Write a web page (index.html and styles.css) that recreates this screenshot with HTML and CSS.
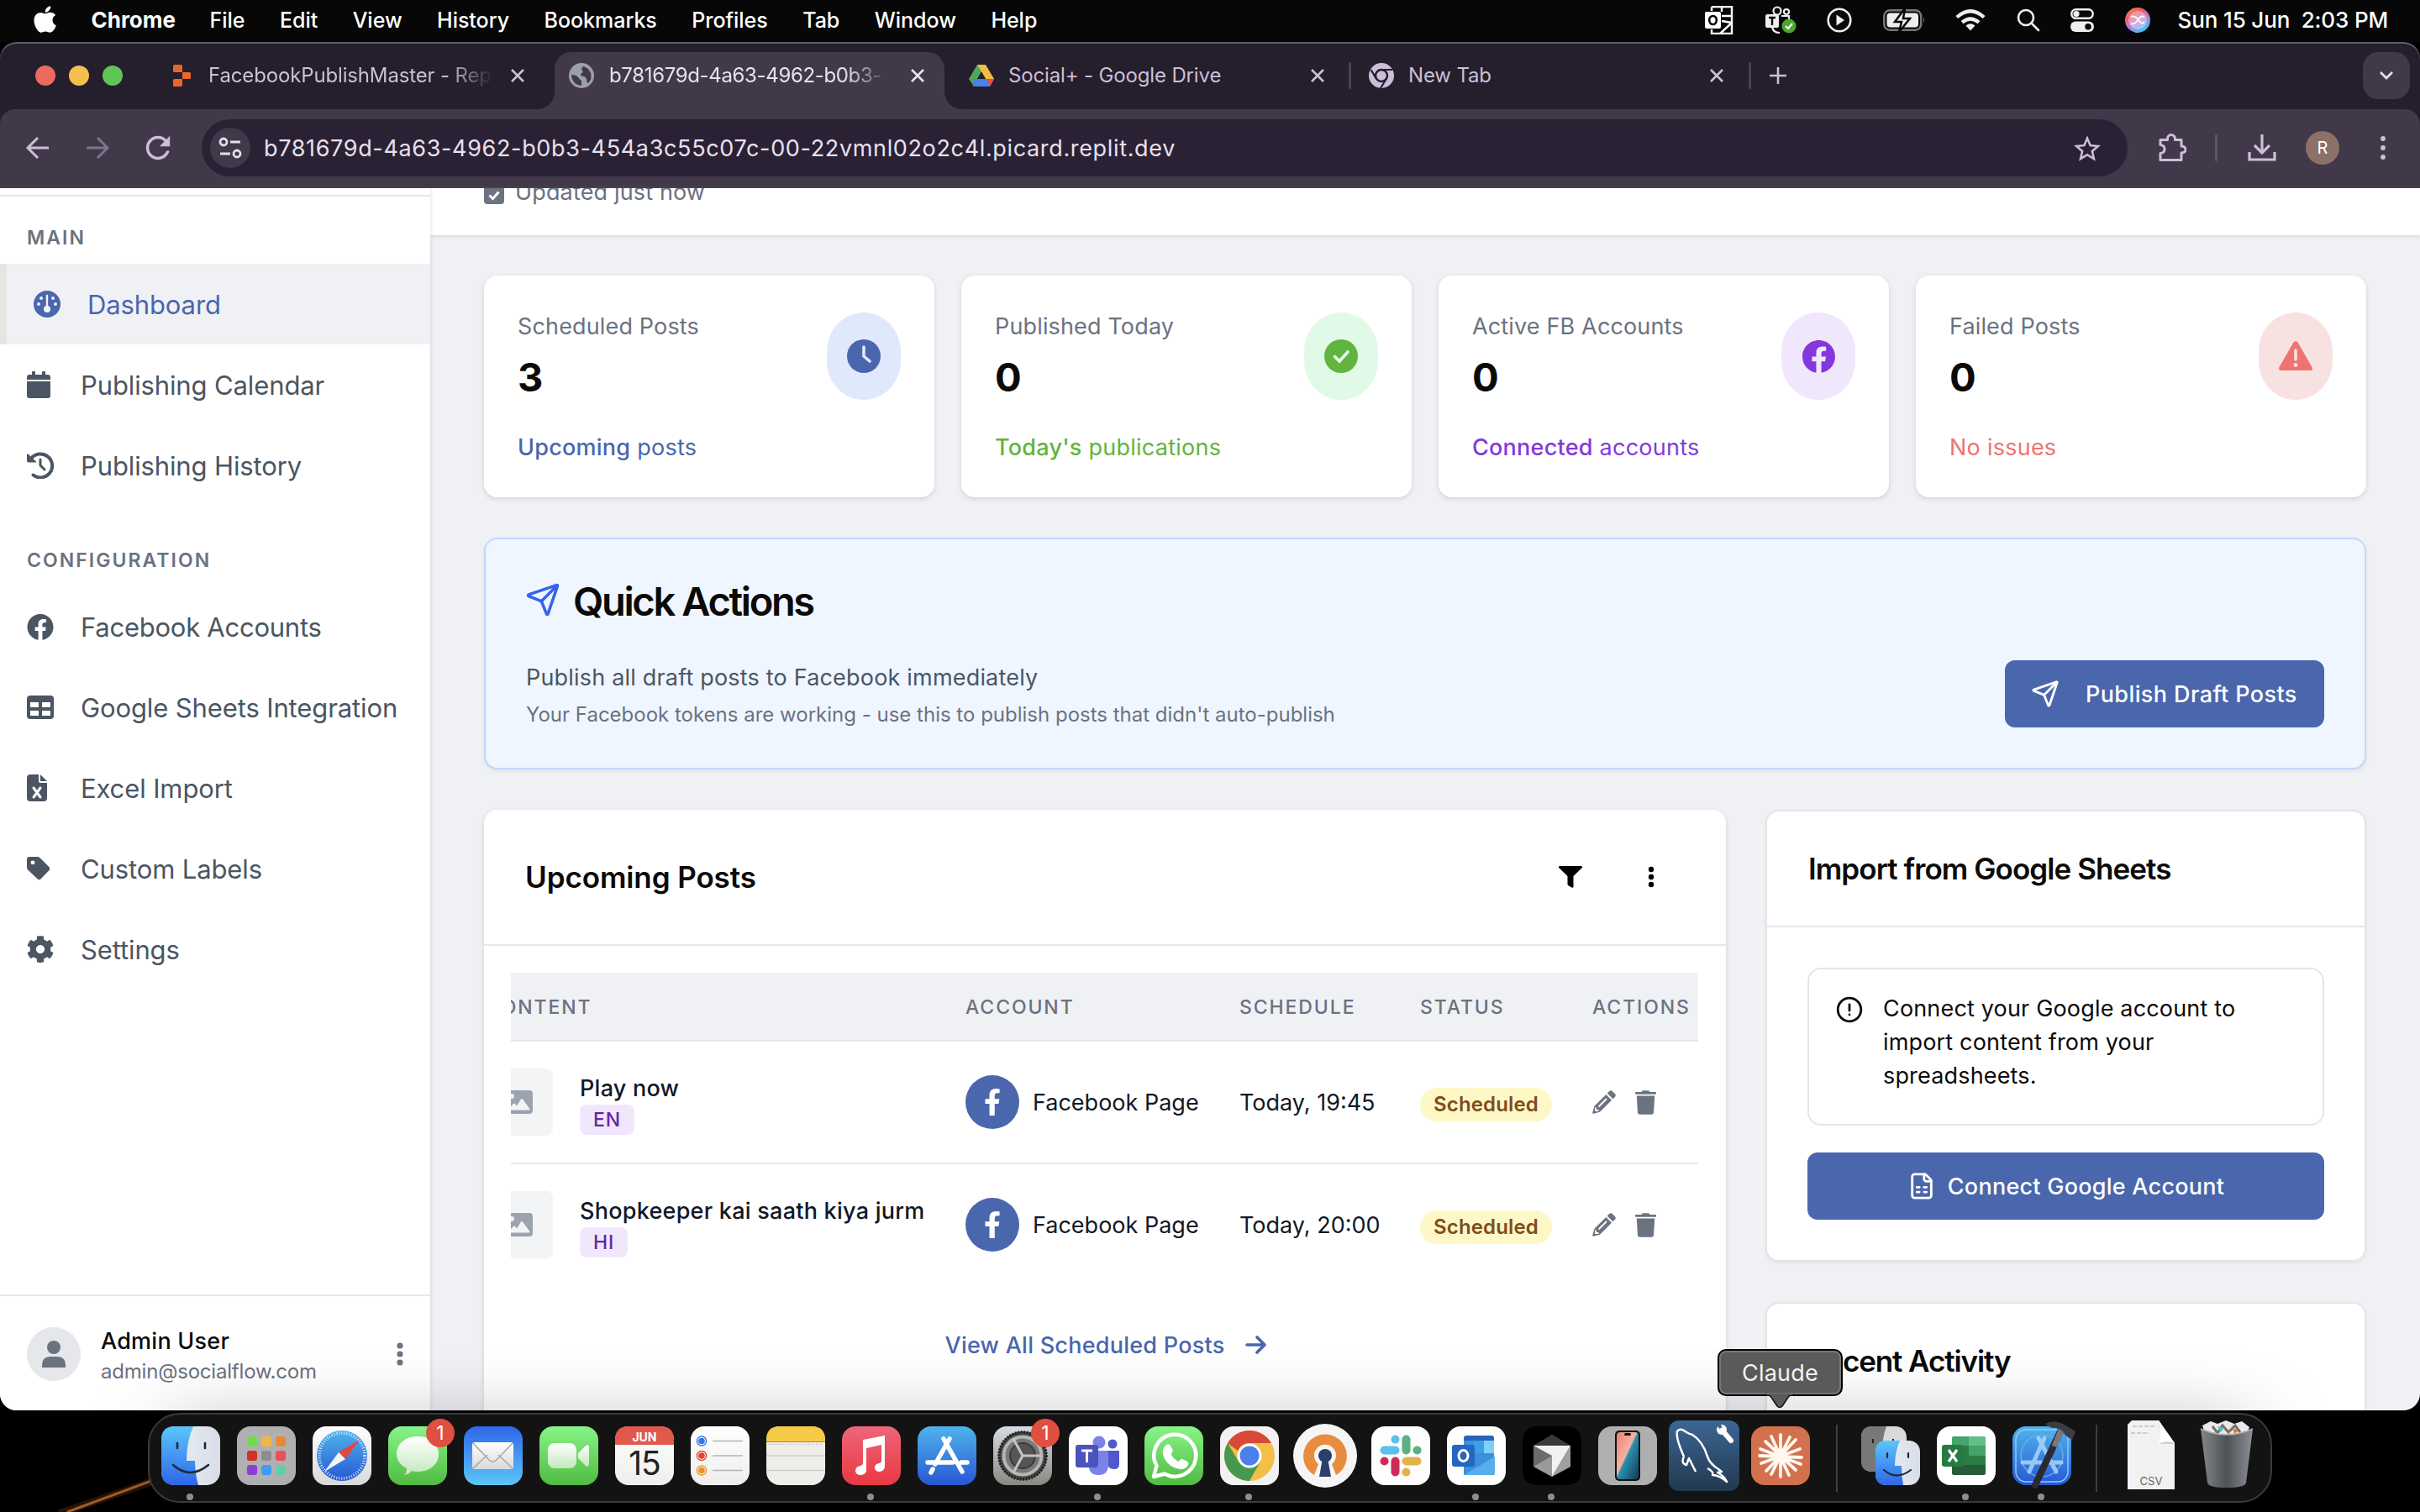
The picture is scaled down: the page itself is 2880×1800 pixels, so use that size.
FILE: index.html
```html
<!DOCTYPE html>
<html lang="en">
<head>
<meta charset="utf-8">
<title>SocialFlow Dashboard</title>
<link rel="stylesheet" href="styles.css">
</head>
<body>
<svg class="sprite" width="0" height="0">
  <defs>
    <symbol id="fb" viewBox="8 8 496 496"><path d="M504 256C504 119 393 8 256 8S8 119 8 256c0 123.78 90.69 226.38 209.25 245V327.69h-63V256h63v-54.64c0-62.15 37-96.48 93.67-96.48 27.14 0 55.52 4.84 55.52 4.84v61h-31.28c-30.8 0-40.41 19.12-40.41 38.73V256h68.78l-11 71.69h-57.78V501C413.31 482.38 504 379.78 504 256z"/></symbol>
    <symbol id="fbf" viewBox="0 0 320 512"><path d="M279.14 288l14.22-92.66h-88.91v-60.13c0-25.35 12.42-50.06 52.24-50.06h40.42V6.26S260.43 0 225.36 0c-73.22 0-121.08 44.38-121.08 124.72v70.62H22.89V288h81.39v224h100.17V288z"/></symbol>
    <symbol id="send" viewBox="0 0 24 24"><g fill="none" stroke="currentColor" stroke-width="2" stroke-linecap="round" stroke-linejoin="round"><path d="M14.536 21.686a.5.5 0 0 0 .937-.024l6.5-19a.496.496 0 0 0-.635-.635l-19 6.5a.5.5 0 0 0-.024.937l7.93 3.18a2 2 0 0 1 1.112 1.11z"/><path d="m21.854 2.147-10.94 10.939"/></g></symbol>
    <symbol id="close" viewBox="0 0 18 18"><path d="M2 2l14 14M16 2L2 16" fill="none" stroke="currentColor" stroke-width="2.6"/></symbol>
    <symbol id="image" viewBox="0 0 32 28"><path fill-rule="evenodd" d="M4 0h24a4 4 0 0 1 4 4v20a4 4 0 0 1-4 4H4a4 4 0 0 1-4-4V4a4 4 0 0 1 4-4zm3 4a3 3 0 1 0 0 6 3 3 0 0 0 0-6zM4 23.500h23.500q1.500-.5.5-2L20 10.500q-1-1-2 0l-5 8-2-2.500q-1-1-2 0l-5.500 6z"/></symbol>
    <symbol id="pen" viewBox="0 0 28 28"><path d="M20 1.200q2-2 4 0l2.800 2.800q2 2 0 4L24.500 10.300 17.700 3.500zM16.300 5l6.700 6.700L10 24.800q-.8.8-2 1.100L1.500 27.800Q0 28 .2 26.500L2.100 20q.3-1.200 1.100-2z"/><path d="M7.500 19.500L17 10M4 20.500v3.500h3.500" fill="none" stroke="#fff" stroke-width="1.800"/></symbol>
    <symbol id="trash" viewBox="0 0 448 512"><path d="M432 32H312l-9.400-18.700A24 24 0 0 0 281.100 0H166.800a23.720 23.720 0 0 0-21.400 13.300L136 32H16A16 16 0 0 0 0 48v16a16 16 0 0 0 16 16h416a16 16 0 0 0 16-16V48a16 16 0 0 0-16-16zM53.200 467a48 48 0 0 0 47.900 45h245.800a48 48 0 0 0 47.900-45L416 112H32z"/></symbol>
    <linearGradient id="gBlue" x2="0" y2="1"><stop stop-color="#5bc6fb"/><stop offset="1" stop-color="#2f66e8"/></linearGradient>
    <linearGradient id="gGreen" x2="0" y2="1"><stop stop-color="#86f487"/><stop offset="1" stop-color="#51bb42"/></linearGradient>
    <linearGradient id="gMail" x2="0" y2="1"><stop stop-color="#2f67e8"/><stop offset="1" stop-color="#5cc6f8"/></linearGradient>
    <linearGradient id="gWhite" x2="0" y2="1"><stop stop-color="#fff"/><stop offset="1" stop-color="#d9d9d9"/></linearGradient>
    <linearGradient id="gPale" x2="0" y2="1"><stop stop-color="#fff"/><stop offset="1" stop-color="#eeeeec"/></linearGradient>
    <linearGradient id="gBubble" x2="0" y2="1"><stop stop-color="#fff"/><stop offset="1" stop-color="#c3e8bd"/></linearGradient>
    <linearGradient id="gSilver" x2="1" y2="0"><stop stop-color="#f1f2f6"/><stop offset="1" stop-color="#d7dde8"/></linearGradient>
    <linearGradient id="gMusic" x2="0" y2="1"><stop stop-color="#ee6579"/><stop offset="1" stop-color="#e83942"/></linearGradient>
    <linearGradient id="gStore" x2="0" y2="1"><stop stop-color="#4fb4ec"/><stop offset="1" stop-color="#2857d4"/></linearGradient>
    <linearGradient id="gGear" x2="0" y2="1"><stop stop-color="#d5dde5"/><stop offset="1" stop-color="#8b8782"/></linearGradient>
    <linearGradient id="gNavy" x2="0" y2="1"><stop stop-color="#3c6694"/><stop offset="1" stop-color="#22394f"/></linearGradient>
    <linearGradient id="gPhone" x2="1" y2="1"><stop stop-color="#ef7d72"/><stop offset=".45" stop-color="#f3b4a4"/><stop offset=".5" stop-color="#2a8fae"/><stop offset="1" stop-color="#123a52"/></linearGradient>
    <linearGradient id="gTrash" x2="1" y2="0"><stop stop-color="#83878b"/><stop offset=".5" stop-color="#4d5256"/><stop offset="1" stop-color="#8d9195"/></linearGradient>
    <linearGradient id="gSiri" x2=".6" y2="1"><stop stop-color="#f2a036"/><stop offset=".35" stop-color="#ee5a63"/><stop offset=".65" stop-color="#b57fd8"/><stop offset="1" stop-color="#3fc2f4"/></linearGradient>
  </defs>
</svg>

<header class="menubar">
  <svg class="apple" viewBox="0 28 380 456"><path d="M318.700 268.700c-.2-36.700 16.400-64.400 50-84.800-18.800-26.900-47.200-41.700-84.700-44.600-35.500-2.800-74.300 20.700-88.500 20.700-15 0-49.400-19.700-76.400-19.700C63.300 141.200 4 184.800 4 273.500q0 39.300 14.400 81.200c12.800 36.700 59 126.700 107.200 125.200 25.200-.6 43-17.900 75.800-17.900 31.800 0 48.300 17.900 76.400 17.900 48.600-.7 90.400-82.500 102.600-119.300-65.200-30.700-61.700-90-61.700-91.900zm-56.600-164.200c27.300-32.400 24.800-61.900 24-72.500-24.100 1.400-52 16.400-67.900 34.900-17.500 19.800-27.800 44.300-25.600 71.900 26.100 2 49.900-11.400 69.500-34.300z"/></svg>
  <b>Chrome</b><span>File</span><span>Edit</span><span>View</span><span>History</span><span>Bookmarks</span><span>Profiles</span><span>Tab</span><span>Window</span><span>Help</span>
  <div class="status">
    <svg width="34" height="34" viewBox="0 0 34 34"><path d="M8 1h24v20M8 6V1M8 28v5h24V20L18 33M20 12h12M20 1v6M32 20l-12-2" fill="none" stroke="#fff" stroke-width="2.400"/><rect y="7" width="19" height="20" rx="2" fill="#fff"/><ellipse cx="9.500" cy="17" rx="4.300" ry="5" fill="none" stroke="#070707" stroke-width="2.600"/></svg>
    <svg width="38" height="34" viewBox="0 0 38 34"><g fill="none" stroke="#eee" stroke-width="2.200"><circle cx="15" cy="6" r="4.500"/><circle cx="26" cy="7" r="3"/><path d="M20 12h9v7M9 25q1 7 9 7"/></g><rect x="1" y="10" width="16" height="16" rx="2" fill="#eee"/><path d="M5 14h8M9 14v9" stroke="#070707" stroke-width="2.400"/><circle cx="29" cy="24" r="8.500" fill="#4aa62f"/><path d="M25 24l3 3 5-6" fill="none" stroke="#fff" stroke-width="2"/></svg>
    <svg width="30" height="30" viewBox="0 0 30 30"><circle cx="15" cy="15" r="13.300" fill="none" stroke="#eee" stroke-width="2.600"/><path d="M11.500 8.500L21 15l-9.500 6.500z" fill="#eee"/></svg>
    <svg width="50" height="28" viewBox="0 0 50 28"><rect x="1.200" y="2.200" width="44" height="23.600" rx="7" fill="none" stroke="#777" stroke-width="2.400"/><path d="M48 10q2 4 0 8z" fill="#777"/><rect x="4.500" y="5.500" width="37.500" height="17" rx="4" fill="#eee"/><path d="M26 0L14 16h8l-3 12 13-16h-8z" fill="#eee" stroke="#070707" stroke-width="2.500"/></svg>
    <svg width="36" height="26" viewBox="0 0 36 26"><g fill="none" stroke="#eee" stroke-width="4.200"><path d="M1.800 9.500q16.200-14.500 32.400 0"/><path d="M8 15.700q10-8.500 20 0"/></g><path d="M18 25.500l-5.500-6q5.500-4.500 11 0z" fill="#eee"/></svg>
    <svg width="28" height="28" viewBox="0 0 28 28"><g fill="none" stroke="#eee" stroke-width="2.600" stroke-linecap="round"><circle cx="11" cy="11" r="9"/><path d="M18 18l8 8"/></g></svg>
    <svg width="28" height="28" viewBox="0 0 28 28"><rect x="1.300" y="1.300" width="25.400" height="10.500" rx="5.200" fill="none" stroke="#eee" stroke-width="2.500"/><circle cx="7" cy="6.500" r="3.600" fill="#eee"/><rect y="15.500" width="28" height="12.500" rx="6.200" fill="#eee"/><circle cx="21" cy="21.700" r="3.800" fill="#070707"/></svg>
    <svg width="30" height="30" viewBox="0 0 30 30"><circle cx="15" cy="15" r="15" fill="url(#gSiri)"/><circle cx="15" cy="15" r="10" fill="#fff" opacity=".35" stroke="#fff" stroke-width="2"/><path d="M7 11q5-2 9 4t7 2M7 19q4 2 8-4t8-4" fill="none" stroke="#fff" stroke-width="1.800"/></svg>
    <time>Sun 15 Jun &nbsp;2:03 PM</time>
  </div>
</header>

<section class="window">
  <div class="tabstrip">
    <div class="lights"><i class="red"></i><i class="yellow"></i><i class="green"></i></div>
    <div class="tab first">
      <svg width="22" height="26" viewBox="0 0 22 26" fill="#e9672a"><path d="M0 1.500Q0 0 1.500 0H9.500Q11 0 11 1.500V9H1.500Q0 9 0 7.500zM11 9h8.500Q21 9 21 10.500v5q0 1.500-1.500 1.500H11zM1.500 17H11v7.500q0 1.500-1.500 1.500h-8Q0 26 0 24.500v-6Q0 17 1.500 17z"/></svg>
      <span class="tab-title fade">FacebookPublishMaster - Rep</span>
      <svg class="x"><use href="#close"/></svg>
    </div>
    <div class="tab active">
      <svg width="30" height="30" viewBox="0 0 30 30"><circle cx="15" cy="15" r="15" fill="#9aa0a6"/><path d="M3 14q6 0 8 3t4 4v6Q4 26 3 14zM17 4q-3 3-1 5t-2 4q0 3 4 3 3 1 3 4t2 4q5-5 3-12-2-6-9-8z" fill="#413849"/></svg>
      <span class="tab-title fade id">b781679d-4a63-4962-b0b3-</span>
      <svg class="x"><use href="#close"/></svg>
    </div>
    <div class="tab drive">
      <svg width="30" height="28" viewBox="0 0 30 28"><path d="M10 1h10l-5 8.500L5.500 26 0 18z" fill="#4fa75b"/><path d="M10 1h10l10 17H20z" fill="#f3bc42"/><path d="M5.500 18H30l-5 9H5z" fill="#4a80e8"/><path d="M21 18h9l-5 9z" fill="#df5140"/><path d="M15 9.500L20 18H10z" fill="#241e2d"/></svg>
      <span class="tab-title">Social+ - Google Drive</span>
      <svg class="x"><use href="#close"/></svg>
    </div>
    <i class="sep"></i>
    <div class="tab new">
      <svg width="30" height="30" viewBox="0 0 30 30"><circle cx="15" cy="15" r="15" fill="#cbbfd8"/><circle cx="15" cy="15" r="7" fill="#cbbfd8" stroke="#241e2d" stroke-width="2.500"/><path d="M15 8h13M9 19L2.500 8M21 18.500L14 30" stroke="#241e2d" stroke-width="2.200"/></svg>
      <span class="tab-title">New Tab</span>
      <svg class="x"><use href="#close"/></svg>
    </div>
    <i class="sep"></i>
    <svg class="plus" width="22" height="22" viewBox="0 0 22 22"><path d="M11 1v20M1 11h20" stroke="#cbbfd8" stroke-width="2.600"/></svg>
    <span class="tab-search"><svg width="18" height="12" viewBox="0 0 18 12"><path d="M2 2l7 7 7-7" fill="none" stroke="#e5dcee" stroke-width="2.800"/></svg></span>
  </div>

  <div class="toolbar">
    <svg class="nav-btn" viewBox="0 0 40 40"><path d="M33 20H9M20 8L8 20l12 12" fill="none" stroke="#cbbfd8" stroke-width="3"/></svg>
    <svg class="nav-btn fwd" viewBox="0 0 40 40"><path d="M7 20h24M20 8l12 12-12 12" fill="none" stroke="#7f7489" stroke-width="3"/></svg>
    <svg class="nav-btn reload" viewBox="3 3 18 18"><path fill="#cbbfd8" d="M17.650 6.350C16.200 4.900 14.210 4 12 4c-4.420 0-7.990 3.580-7.990 8s3.570 8 7.990 8c3.730 0 6.840-2.550 7.730-6h-2.080c-.82 2.330-3.040 4-5.650 4-3.310 0-6-2.690-6-6s2.690-6 6-6c1.660 0 3.140.69 4.220 1.780L13 11h7V4l-2.350 2.350z"/></svg>
    <div class="omnibox">
      <span class="site-info"><svg width="28" height="26" viewBox="0 0 28 26" fill="none" stroke="#e5dcee" stroke-width="2.800"><circle cx="6" cy="6" r="4"/><path d="M14 6h12M2 20h12"/><circle cx="22" cy="20" r="4"/></svg></span>
      <span class="url">b781679d-4a63-4962-b0b3-454a3c55c07c-00-22vmnl02o2c4l.picard.replit.dev</span>
      <svg width="32" height="31" viewBox="2 2 20 19"><path fill="#cbbfd8" d="M22 9.240l-7.190-.62L12 2 9.190 8.630 2 9.240l5.460 4.730L5.820 21 12 17.270 18.180 21l-1.630-7.030L22 9.240zM12 15.400l-3.760 2.270 1-4.280-3.320-2.880 4.380-.38L12 6.100l1.710 4.040 4.380.38-3.320 2.880 1 4.280L12 15.400z"/></svg>
    </div>
    <svg class="ext" width="34" height="34" viewBox="0 0 34 34"><path d="M3 7.500h8.500V6a4.500 4.500 0 0 1 9 0v1.500H28V15q5 .5 5 4t-5 4v8.500H3v-8q5-.5 5-5t-5-5z" fill="none" stroke="#cbbfd8" stroke-width="3" stroke-linejoin="round"/></svg>
    <i class="sep tall"></i>
    <svg class="dl" width="34" height="32" viewBox="0 0 34 32"><path d="M17 0v22M8 13l9 9 9-9M2 21v9h30v-9" fill="none" stroke="#cbbfd8" stroke-width="3.200"/></svg>
    <span class="profile">R</span>
    <svg class="kebab" width="6" height="28" viewBox="0 0 6 28" fill="#cbbfd8"><circle cx="3" cy="3" r="2.900"/><circle cx="3" cy="14" r="2.900"/><circle cx="3" cy="25" r="2.900"/></svg>
  </div>

  <div class="page">
    <aside class="sidebar">
      <nav>
        <h4>MAIN</h4>
        <a class="current"><svg width="32" height="32" viewBox="0 0 32 32"><circle cx="16" cy="16" r="16"/><path d="M16 6v14" stroke="#f0f1f5" stroke-width="2.400" stroke-linecap="round"/><g fill="#f0f1f5"><circle cx="16" cy="22" r="4"/><circle cx="9" cy="9" r="2"/><circle cx="23" cy="9" r="2"/><circle cx="6" cy="16" r="2"/><circle cx="26" cy="16" r="2"/></g></svg>Dashboard</a>
        <a><svg width="28" height="32" viewBox="0 0 28 32"><path d="M0 10V7q0-3 3-3h3V1.500a2 2 0 0 1 4 0V4h8V1.500a2 2 0 0 1 4 0V4h3q3 0 3 3v3zM0 12h28v17q0 3-3 3H3q-3 0-3-3z"/></svg>Publishing Calendar</a>
        <a><svg width="32" height="32" viewBox="0 0 32 32"><path d="M5 8A14 14 0 1 1 7.500 27.500" fill="none" stroke="currentColor" stroke-width="4" stroke-linecap="round"/><path d="M0 3.500Q0 1.500 1.800 2.800L11 11.500q.8 1-.6 1H2q-2 0-2-2z"/><path d="M16 9v7l5 5" fill="none" stroke="currentColor" stroke-width="3" stroke-linecap="round"/></svg>Publishing History</a>
        <h4 class="config">CONFIGURATION</h4>
        <a class="accounts"><svg width="32" height="31"><use href="#fb"/></svg>Facebook Accounts</a>
        <a><svg width="32" height="28" viewBox="0 0 32 28"><path fill-rule="evenodd" d="M4 0h24q4 0 4 4v20q0 4-4 4H4q-4 0-4-4V4q0-4 4-4zm0 8v6h10V8zm14 0v6h10V8zM4 18v6h10v-6zm14 0v6h10v-6z"/></svg>Google Sheets Integration</a>
        <a><svg width="24" height="32" viewBox="0 0 24 32"><path d="M4 0h10v8q0 2 2 2h8v18q0 4-4 4H4q-4 0-4-4V4q0-4 4-4zM16 0l8 8h-8z"/><path d="M8 16l8 11M16 16L8 27" stroke="#fff" stroke-width="3" stroke-linecap="round"/></svg>Excel Import</a>
        <a><svg width="28" height="28" viewBox="0 0 28 28"><path fill-rule="evenodd" d="M0 3q0-3 3-3h9.500q1.800 0 3 1.200L26.300 12q2 2 0 4.200L16.700 26.300q-2 2-4.200 0L1.200 15.500Q0 14.300 0 12.500zm7 1.500a2.400 2.400 0 1 0 0 4.800 2.400 2.400 0 0 0 0-4.800z"/></svg>Custom Labels</a>
        <a><svg width="32" height="32" viewBox="6 6 500 500"><path d="M487.400 315.700l-42.600-24.600c4.300-23.200 4.300-47 0-70.200l42.600-24.600c4.900-2.800 7.100-8.600 5.500-14-11.100-35.600-30-67.800-54.700-94.600-3.800-4.100-10-5.100-14.800-2.300L380.800 110c-17.900-15.400-38.500-27.300-60.800-35.100V25.800c0-5.600-3.900-10.500-9.400-11.700-36.700-8.200-74.300-7.800-109.200 0-5.500 1.200-9.400 6.100-9.400 11.700V75c-22.200 7.900-42.800 19.800-60.800 35.100L88.700 85.500c-4.900-2.800-11-1.900-14.800 2.300-24.700 26.700-43.600 58.900-54.700 94.600-1.700 5.400.6 11.200 5.500 14L67.300 221c-4.300 23.200-4.300 47 0 70.200l-42.600 24.600c-4.900 2.800-7.100 8.600-5.500 14 11.100 35.600 30 67.800 54.700 94.600 3.800 4.100 10 5.100 14.800 2.300l42.600-24.600c17.900 15.400 38.500 27.300 60.800 35.100v49.200c0 5.600 3.900 10.500 9.400 11.700 36.700 8.200 74.300 7.800 109.200 0 5.500-1.200 9.400-6.100 9.400-11.700v-49.200c22.200-7.900 42.800-19.800 60.800-35.100l42.600 24.600c4.900 2.800 11 1.900 14.800-2.300 24.700-26.700 43.600-58.900 54.700-94.600 1.500-5.500-.7-11.300-5.600-14.100zM256 336c-44.100 0-80-35.900-80-80s35.900-80 80-80 80 35.900 80 80-35.900 80-80 80z"/></svg>Settings</a>
      </nav>
      <div class="user">
        <span class="user-pic"><svg width="28" height="32" viewBox="0 0 28 32"><circle cx="14" cy="8" r="8"/><path d="M0 32v-2q0-11 10-11h8q10 0 10 11v2z"/></svg></span>
        <div class="user-text"><strong>Admin User</strong><span>admin@socialflow.com</span></div>
        <svg class="dots" width="8" height="28" viewBox="0 0 8 28"><circle cx="4" cy="4" r="3.600"/><circle cx="4" cy="14" r="3.600"/><circle cx="4" cy="24" r="3.600"/></svg>
      </div>
    </aside>

    <main>
      <div class="page-head"><p><svg width="24" height="28" viewBox="0 0 24 28"><rect width="24" height="28" rx="4"/><path d="M6.500 17.500l4 4 7-8" fill="none" stroke="#fff" stroke-width="3"/></svg>Updated just now</p></div>
      <div class="content">
        <div class="stats">
          <article class="card stat blue"><div class="top"><div><p>Scheduled Posts</p><b>3</b></div><span class="pill"><svg width="40" height="40" viewBox="0 0 40 40"><circle cx="20" cy="20" r="20"/><path d="M20 9v11l7 6" fill="none" stroke="#dfe9fb" stroke-width="3.600" stroke-linecap="round"/></svg></span></div><p class="sub"><em>Upcoming</em> posts</p></article>
          <article class="card stat green"><div class="top"><div><p>Published Today</p><b>0</b></div><span class="pill"><svg width="40" height="40" viewBox="0 0 40 40"><circle cx="20" cy="20" r="20"/><path d="M12.500 20.500l5.500 5.500 10-11" fill="none" stroke="#e1f9e7" stroke-width="3.800" stroke-linecap="round"/></svg></span></div><p class="sub"><em>Today's</em> publications</p></article>
          <article class="card stat purple"><div class="top"><div><p>Active FB Accounts</p><b>0</b></div><span class="pill"><svg width="39" height="39"><use href="#fb"/></svg></span></div><p class="sub"><em>Connected</em> accounts</p></article>
          <article class="card stat rose"><div class="top"><div><p>Failed Posts</p><b>0</b></div><span class="pill"><svg width="40" height="36" viewBox="0 0 40 36"><path d="M17.500 1.500q2.500-3 5 0L39.500 31q1.500 4-2.500 4H3q-4 0-2.500-4z"/><path d="M20 11v11" stroke="#f8e2e1" stroke-width="3.600" stroke-linecap="round"/><circle cx="20" cy="28.500" r="2.400" fill="#f8e2e1"/></svg></span></div><p class="sub">No issues</p></article>
        </div>

        <section class="quick">
          <h2><svg width="42" height="42"><use href="#send"/></svg>Quick Actions</h2>
          <div class="quick-row">
            <div><p>Publish all draft posts to Facebook immediately</p><small>Your Facebook tokens are working - use this to publish posts that didn't auto-publish</small></div>
            <button class="btn publish"><svg width="34" height="34"><use href="#send"/></svg>Publish Draft Posts</button>
          </div>
        </section>

        <div class="columns">
          <section class="card posts">
            <header><h3>Upcoming Posts</h3>
              <svg width="28" height="26" viewBox="0 0 512 490" preserveAspectRatio="none"><path d="M487.976 0H24.028C2.710 0-8.047 25.866 7.058 40.971L192 225.941V412c0 7.831 3.821 15.170 10.237 19.662l80 50C298.020 492.690 320 480.493 320 460.980V225.941l184.947-184.970C520.021 25.896 509.338 0 487.976 0z"/></svg>
              <svg class="more" width="8" height="26" viewBox="0 0 8 26"><circle cx="4" cy="4" r="3.200"/><circle cx="4" cy="13" r="3.200"/><circle cx="4" cy="22" r="3.200"/></svg>
            </header>
            <div class="scroller">
              <div class="table">
                <div class="row head"><span>CONTENT</span><span>ACCOUNT</span><span>SCHEDULE</span><span>STATUS</span><span>ACTIONS</span></div>
                <div class="row">
                  <div class="post"><i><svg width="32" height="28"><use href="#image"/></svg></i><div><p>Play now</p><span class="lang">EN</span></div></div>
                  <div class="account"><i><svg width="20" height="32"><use href="#fbf"/></svg></i>Facebook Page</div>
                  <span>Today, 19:45</span>
                  <span><mark>Scheduled</mark></span>
                  <div class="actions"><svg width="28" height="28"><use href="#pen"/></svg><svg width="25" height="29"><use href="#trash"/></svg></div>
                </div>
                <div class="row">
                  <div class="post"><i><svg width="32" height="28"><use href="#image"/></svg></i><div><p>Shopkeeper kai saath kiya jurm</p><span class="lang">HI</span></div></div>
                  <div class="account"><i><svg width="20" height="32"><use href="#fbf"/></svg></i>Facebook Page</div>
                  <span>Today, 20:00</span>
                  <span><mark>Scheduled</mark></span>
                  <div class="actions"><svg width="28" height="28"><use href="#pen"/></svg><svg width="25" height="29"><use href="#trash"/></svg></div>
                </div>
              </div>
            </div>
            <a class="view-all">View All Scheduled Posts<svg width="25" height="22" viewBox="0 0 25 22"><path d="M2 11h20M14 2l9 9-9 9" fill="none" stroke="currentColor" stroke-width="3.600" stroke-linecap="round" stroke-linejoin="round"/></svg></a>
          </section>

          <div class="side">
            <section class="panel import">
              <header><h3>Import from Google Sheets</h3></header>
              <div class="panel-body">
                <div class="notice"><svg width="32" height="32" viewBox="0 0 32 32" fill="none" stroke="#0c0a09" stroke-width="2.800" stroke-linecap="round"><circle cx="16" cy="16" r="13.800"/><path d="M16 10v7M16 22v.1"/></svg><p>Connect your Google account to import content from your spreadsheets.</p></div>
                <button class="btn connect"><svg width="34" height="34" viewBox="0 0 24 24" fill="none" stroke="#fff" stroke-width="2" stroke-linecap="round" stroke-linejoin="round"><path d="M15 2H6a2 2 0 0 0-2 2v16a2 2 0 0 0 2 2h12a2 2 0 0 0 2-2V7Z"/><path d="M14 2v4a2 2 0 0 0 2 2h4M8 13h2M14 13h2M8 17h2M14 17h2"/></svg>Connect Google Account</button>
              </div>
            </section>
            <section class="panel recent"><header><h3>Recent Activity</h3></header></section>
          </div>
        </div>
      </div>
    </main>
  </div>
</section>

<footer class="desktop">
  <svg class="flare" width="180" height="60" viewBox="0 0 180 60"><path d="M70 62L180 24" stroke="#7a4316" stroke-width="9" opacity=".3"/><path d="M80 60L180 23" stroke="#a35c27" stroke-width="3"/></svg>
  <div class="dock">
    <div class="app run"><svg viewBox="0 0 70 70"><rect width="70" height="70" rx="16" fill="url(#gSilver)"/><path d="M16 0h22q-8 18-8 41h10q0 15 4 29H16Q0 70 0 54V16Q0 0 16 0z" fill="url(#gBlue)"/><path d="M19 20v6M52 20v6M14 46q20 18 42 0" fill="none" stroke="#1c2a3c" stroke-width="2.600" stroke-linecap="round"/></svg></div>
    <div class="app"><svg viewBox="0 0 70 70"><rect width="70" height="70" rx="16" fill="#b0b0b2"/><g><rect x="12" y="12" width="12" height="12" rx="3" fill="#76d84c"/><rect x="29" y="12" width="12" height="12" rx="3" fill="#f0b83c"/><rect x="46" y="12" width="12" height="12" rx="3" fill="#e88a34"/><rect x="12" y="29" width="12" height="12" rx="3" fill="#cf3226"/><rect x="29" y="29" width="12" height="12" rx="3" fill="#8b8d90"/><rect x="46" y="29" width="12" height="12" rx="3" fill="#e8505b"/><rect x="12" y="46" width="12" height="12" rx="3" fill="#8b3fcf"/><rect x="29" y="46" width="12" height="12" rx="3" fill="#3d9df2"/><rect x="46" y="46" width="12" height="12" rx="3" fill="#63cfa0"/></g></svg></div>
    <div class="app"><svg viewBox="0 0 70 70"><rect width="70" height="70" rx="16" fill="url(#gWhite)"/><circle cx="35" cy="35" r="30" fill="url(#gStore)"/><circle cx="35" cy="35" r="27" fill="none" stroke="#d5ecfb" stroke-width="3.500" stroke-dasharray="1 2"/><path d="M56 16L39 39l-8-8z" fill="#e4473c"/><path d="M14 54l17-23 8 8z" fill="#f3f3f3"/></svg></div>
    <div class="app"><svg viewBox="0 0 70 70"><rect width="70" height="70" rx="16" fill="url(#gGreen)"/><path d="M35 12c15 0 25 9 25 21S50 54 35 54q-4 0-7-1-3 4-9 5 3-3 3-8Q10 44 10 33c0-12 10-21 25-21z" fill="url(#gBubble)"/><circle cx="62" cy="8" r="17" fill="#e04f3f"/></svg><span class="badge">1</span></div>
    <div class="app"><svg viewBox="0 0 70 70"><rect width="70" height="70" rx="16" fill="url(#gMail)"/><rect x="10" y="19" width="49" height="32" rx="3" fill="url(#gWhite)"/><path d="M11 50l17-16M58 50L41 34M11 20l19 20q5 4 9 0l19-20" fill="none" stroke="#a9a9a9" stroke-width="1.600"/></svg></div>
    <div class="app"><svg viewBox="0 0 70 70"><rect width="70" height="70" rx="16" fill="url(#gGreen)"/><rect x="10" y="20" width="34" height="30" rx="8" fill="url(#gBubble)"/><path d="M46 32l9-9q4-2 4 2v20q0 4-4 2l-9-9z" fill="url(#gBubble)"/></svg></div>
    <div class="app cal"><svg viewBox="0 0 70 70"><rect width="70" height="70" rx="16" fill="url(#gPale)"/><path d="M0 22v-6Q0 0 16 0h38q16 0 16 16v6z" fill="#e0594c"/></svg><small>JUN</small><strong>15</strong></div>
    <div class="app"><svg viewBox="0 0 70 70"><rect width="70" height="70" rx="16" fill="url(#gPale)"/><path d="M26 17.500h36M26 35h36M26 52.500h36" stroke="#b5b5b9" stroke-width="1.600"/><g fill="#fff" stroke-width="1.400"><circle cx="13" cy="17.500" r="5.500" stroke="#3478e8"/><circle cx="13" cy="35" r="5.500" stroke="#e24436"/><circle cx="13" cy="52.500" r="5.500" stroke="#e8912d"/></g><circle cx="13" cy="17.500" r="3.800" fill="#3478e8"/><circle cx="13" cy="35" r="3.800" fill="#e24436"/><circle cx="13" cy="52.500" r="3.800" fill="#e8912d"/></svg></div>
    <div class="app"><svg viewBox="0 0 70 70"><rect width="70" height="70" rx="16" fill="#efeeea"/><path d="M0 18v-2Q0 0 16 0h38q16 0 16 16v2z" fill="#f5cb45"/><path d="M0 18.500h70" stroke="#a58a35" stroke-width="1.200"/><path d="M2 21.500h66" stroke="#aaa" stroke-dasharray="1 2"/><path d="M0 35h70M0 52.500h70" stroke="#cfcfcb" stroke-width="1.400"/></svg></div>
    <div class="app run"><svg viewBox="0 0 70 70"><rect width="70" height="70" rx="16" fill="url(#gMusic)"/><path d="M25 16l26-5v36q0 6-6 7-6 0-6-5 0-4 5-5 3-.5 3-3V22l-18 4v26q0 5-6 6-7 0-7-5 0-5 6-6 3-1 3-4z" fill="#fff"/></svg></div>
    <div class="app"><svg viewBox="0 0 70 70"><rect width="70" height="70" rx="16" fill="url(#gStore)"/><path d="M38 15L21 45M31 15l22 39M12 43h30M52 43h7M18 51l-2 4" fill="none" stroke="#fff" stroke-width="5.500" stroke-linecap="round"/></svg></div>
    <div class="app"><svg viewBox="0 0 70 70"><rect width="70" height="70" rx="16" fill="url(#gGear)"/><circle cx="35" cy="35" r="29" fill="#4a4a4a"/><circle cx="35" cy="35" r="28" fill="none" stroke="#1f1f1f" stroke-width="3.500" stroke-dasharray="2 1.500"/><circle cx="35" cy="35" r="22.500" fill="#777" stroke="#b5b5b5" stroke-width="4"/><circle cx="35" cy="35" r="15" fill="#555" stroke="#3a3a3a" stroke-width="2"/><path d="M35 35h22M35 35L24 15M35 35L24 55" stroke="#c4c4c4" stroke-width="3"/><circle cx="62" cy="8" r="17" fill="#e04f3f"/></svg><span class="badge">1</span></div>
    <div class="app run"><svg viewBox="0 0 70 70"><rect width="70" height="70" rx="16" fill="#fff"/><circle cx="36" cy="19" r="7.500" fill="#7b83eb"/><circle cx="52" cy="21" r="5.500" fill="#5059c9"/><path d="M46 29h14v16q0 6-6 6-8 0-8-8z" fill="#5059c9"/><path d="M24 29h23v17q0 12-12 12-11 0-11-11z" fill="#7b83eb"/><rect x="8" y="22" width="27" height="27" rx="3" fill="#4b53bc"/><path d="M15 29h13M21.500 29v14" stroke="#fff" stroke-width="3"/></svg></div>
    <div class="app"><svg viewBox="0 0 70 70"><rect width="70" height="70" rx="16" fill="url(#gGreen)"/><path d="M11 60l3.500-13A25 25 0 1 1 24 56.500z" fill="none" stroke="#fff" stroke-width="4.500" stroke-linejoin="round"/><path d="M26 22q3-2 5 1l2.500 5q1 2-2 5 3 6 9 9 3-4 5-3l5.500 3q2 1 1 4-3 6-10 5-16-3-20-18-1-7 4-11z" fill="#fff"/></svg></div>
    <div class="app run"><svg viewBox="0 0 70 70"><rect width="70" height="70" rx="16" fill="#f2f2f2"/><circle cx="35" cy="35" r="30" fill="#f3bf45"/><path d="M9 20A30 30 0 0 1 61 20H35q-10 0-14 9z" fill="#d8493a"/><path d="M9 20A30 30 0 0 0 35 65l13-23q-13 12-26 0z" fill="#47984f"/><circle cx="35" cy="35" r="14.500" fill="#fff"/><circle cx="35" cy="35" r="11.500" fill="#4a80e8"/></svg></div>
    <div class="app"><svg viewBox="0 0 70 70"><circle cx="35" cy="35" r="38" fill="#f5f5f6"/><path d="M22 58A26 26 0 1 1 48 58L43 45a13 13 0 1 0-16 0z" fill="#e88c40"/><circle cx="35" cy="35" r="8" fill="#28406a"/><path d="M32 38h6l4 22H28z" fill="#28406a"/></svg></div>
    <div class="app"><svg viewBox="0 0 70 70"><rect width="70" height="70" rx="16" fill="#fdfdfd"/><g stroke-width="10" stroke-linecap="round"><path d="M15.500 28.500h13M28.500 15.500v.1" stroke="#5cc0ea"/><path d="M41.500 15.500v13M54.500 28.500h.1" stroke="#5ab27e"/><path d="M41.500 41.500h13M41.500 54.500v.1" stroke="#e3b348"/><path d="M28.500 41.500v13M15.500 41.500h.1" stroke="#cd2c59"/></g></svg></div>
    <div class="app run"><svg viewBox="0 0 70 70"><rect width="70" height="70" rx="16" fill="#fff"/><rect x="20" y="11" width="36" height="36" rx="3" fill="#2763b8"/><path d="M20 17h12v15H20z" fill="#3a93de"/><path d="M32 17h12v15H32z" fill="#3e9ee5"/><path d="M44 17h12v15H44z" fill="#7bd1f7"/><path d="M20 32h36v26H20z" fill="#3b8fdc"/><path d="M20 58l37-22v20q0 2-2 2z" fill="#56aeea"/><rect x="6" y="22" width="27" height="26" rx="3" fill="#2466c0"/><ellipse cx="19.500" cy="35" rx="5.500" ry="6.500" fill="none" stroke="#fff" stroke-width="3"/></svg></div>
    <div class="app run"><svg viewBox="0 0 70 70"><rect width="70" height="70" rx="16" fill="#000"/><path d="M35 10l22 13v25L35 60 13 48V23z" fill="#4a4a4a"/><path d="M35 10l22 13H13z" fill="#3a3a3a"/><path d="M13 23l22 12L13 48z" fill="#6b6b6b"/><path d="M13 48l22-13v25z" fill="#9a9a9a"/><path d="M13 23h44L35 60V35z" fill="#f1f1f1"/><path d="M57 23v25L35 60z" fill="#9f9f9f"/></svg></div>
    <div class="app"><svg viewBox="0 0 70 70"><rect width="70" height="70" rx="16" fill="#afafb1"/><rect x="20" y="5" width="30" height="60" rx="5" fill="#111"/><rect x="22" y="7" width="26" height="56" rx="4" fill="url(#gPhone)"/><rect x="31" y="8" width="8" height="3" rx="1.500" fill="#111"/></svg></div>
    <div class="app"><svg viewBox="0 0 70 70"><rect x="-6" y="-7" width="84" height="84" rx="12" fill="url(#gNavy)"/><path d="M12 36Q2 14 4 6q3-5 11 1 3 2 7 3 12 7 18 26 3 9 13 15l4 3-5 1q8 4 11 11-9-8-17-8 2-4-6-8M12 36q-4 8 3 10l3-8 8 16" fill="none" stroke="#fff" stroke-width="2.500" stroke-linejoin="round"/><path d="M57 4l11 13" stroke="#fff" stroke-width="6" stroke-linecap="round"/><circle cx="57" cy="4" r="6" fill="#fff"/><path d="M52-4l4 6" stroke="#3a6391" stroke-width="4"/></svg></div>
    <div class="app claude"><svg viewBox="0 0 70 70"><rect width="70" height="70" rx="16" fill="#d3704d"/><path d="M35 10v50M10 35l50 2M17 18l36 34M53 16L18 53M24 12l21 46M46 13L24 57M11 27l48 18M58 27L12 44" stroke="#fff7f0" stroke-width="3.800" stroke-linecap="round"/></svg><div class="tooltip">Claude<svg width="34" height="18" viewBox="0 0 34 18"><path d="M0 0h34q-5 1-8 6l-6 9q-3 3-6 0L8 6Q5 1 0 0z" fill="#5a5a5a" stroke="#111" stroke-width="1.500"/><path d="M1 0h32" stroke="#5a5a5a" stroke-width="4"/></svg></div></div>
    <i class="rule"></i>
    <div class="app"><svg viewBox="0 0 70 70"><rect width="54" height="54" rx="13" fill="#d8d9db"/><path d="M13 0h17q-6 14-6 54H13Q0 54 0 41V13Q0 0 13 0z" fill="#77787a"/><path d="M14 15v5M38 15v5" stroke="#222" stroke-width="2"/><rect x="17" y="17" width="53" height="53" rx="13" fill="url(#gSilver)"/><path d="M30 17h16q-6 14-6 30h8q0 12 2 23H30q-13 0-13-13V30q0-13 13-13z" fill="url(#gBlue)"/><path d="M31 32v5M56 32v5M27 52q15 13 32 0" fill="none" stroke="#1c2a3c" stroke-width="2.200" stroke-linecap="round"/></svg></div>
    <div class="app run"><svg viewBox="0 0 70 70"><rect width="70" height="70" rx="16" fill="#fff"/><rect x="18" y="12" width="40" height="46" rx="3" fill="#2a7d46"/><path d="M38 12h17q3 0 3 3v8H38z" fill="#61c08a"/><path d="M18 23V15q0-3 3-3h17v11zM38 23h20v12H38z" fill="#46a36b"/><path d="M18 46h40v9q0 3-3 3H21q-3 0-3-3z" fill="#265c38"/><rect x="6" y="22" width="26" height="26" rx="3" fill="#287a43"/><path d="M14 28l10 14M24 28L14 42" stroke="#fff" stroke-width="3.200"/></svg></div>
    <div class="app run"><svg viewBox="0 0 70 70"><rect width="70" height="70" rx="16" fill="url(#gStore)"/><rect x="4" y="4" width="62" height="62" rx="12" fill="none" stroke="#8fd0fa" stroke-width="1.400"/><circle cx="35" cy="35" r="25" fill="none" stroke="#6fb5f0" stroke-width="1.200"/><path d="M38 14L20 54M31 14l21 40M12 43h46" stroke="#b9dffb" stroke-width="5" stroke-linecap="round" opacity=".75"/><path d="M57 6L27 70" stroke="#2a2b31" stroke-width="8" stroke-linecap="round"/><path d="M59 2L50 24" stroke="#77797f" stroke-width="7"/><path d="M39-3q12-6 26 3l10 6-4 10-8-5q-3-8-12-9-8 0-12-5z" fill="#3b3d45"/></svg></div>
    <i class="rule second"></i>
    <div class="app csv"><svg viewBox="0 0 70 70"><path d="M12-7h32L63 20v55H7V-2z" fill="#f2f2f2"/><path d="M44-7q2 24 1 28h18z" fill="#cfcfcf"/><path d="M44-7l19 27q-12-4-19 1 3-14 0-28z" fill="#fff"/><path d="M13 0h28M11 8h22" stroke="#ccc" stroke-width="2" stroke-dasharray="5 2"/></svg><small>CSV</small></div>
    <div class="app"><svg viewBox="0 0 70 70"><path d="M6-1L16-6l8 3 10-4 10 4 9-3 9 7-4 10H10z" fill="#e9e9e9"/><path d="M18 0l6 8 6-9 7 8 8-8 6 8" fill="none" stroke="#7d6f60" stroke-width="3"/><path d="M24 0l8 2-4 5z" fill="#4cc3d8"/><path d="M42 2l7 3-5 4z" fill="#d9773a"/><path d="M4 3q31 14 62 0l-8 64q-1 6-23 6T12 67z" fill="url(#gTrash)"/><path d="M4 3q31 14 62 0" fill="none" stroke="#a9adb0" stroke-width="1.600"/></svg></div>
  </div>
</footer>
</body>
</html>
```
FILE: styles.css
```css
* { box-sizing: border-box; }
body {
  margin: 0; width: 2880px; height: 1800px; overflow: hidden;
  display: flex; flex-direction: column; background: #000;
  font-family: "Inter", "Liberation Sans", sans-serif; color: #0c0a09;
}
svg { display: block; flex: none; }
.sprite { position: absolute; }
h2, h3, h4, p { margin: 0; }
i, em { font-style: normal; }

/* Menu bar */
.menubar { height: 50px; flex: none; background: #070707; color: #fff; display: flex; align-items: center; gap: 41.5px; padding: 0 38px 3px 40px; font-size: 25px; font-weight: 500; letter-spacing: -.03px; }
.menubar b { font-size: 26px; font-weight: 700; letter-spacing: 0; margin-right: -1px; }
.apple { width: 27px; height: 32px; fill: #fff; margin-bottom: 2px; }
.status { margin-left: auto; display: flex; align-items: center; gap: 36.5px; }
.status time { font-size: 26px; letter-spacing: -.15px; margin-left: -3.5px; }

/* Browser window */
.window { height: 1629px; flex: none; background: #241e2d; border-radius: 20px; overflow: hidden; display: flex; flex-direction: column; box-shadow: inset 0 2px 0 #605b66; }
.tabstrip { height: 80px; flex: none; display: flex; align-items: center; color: #cbbfd8; }
.lights { width: 206px; padding-left: 42px; display: flex; gap: 16px; }
.lights i { width: 24px; height: 24px; border-radius: 50%; }
.red { background: #ec6a5e; } .yellow { background: #f4bf4f; } .green { background: #61c554; }
.tab { display: flex; align-items: center; height: 80px; font-size: 24px; letter-spacing: -.15px; }
.tab-title { flex: 1; min-width: 0; white-space: nowrap; margin-right: 24px; line-height: 34px; }
.fade { -webkit-mask-image: linear-gradient(90deg, #000 84%, transparent); mask-image: linear-gradient(90deg, #000 84%, transparent); }
.x { width: 18px; height: 18px; }
.tab.first { width: 454px; gap: 20px; padding-right: 35px; }
.tab.first .tab-title { margin-right: 0; }
.tab.active { width: 464px; height: 68px; align-self: flex-end; background: #413849; color: #e8e0ee; border-radius: 20px 20px 0 0; padding: 0 23px 12px 17px; gap: 18px; position: relative; letter-spacing: -.35px; }
.tab.active .tab-title { margin-right: 6px; }
.tab.active::before, .tab.active::after { content: ""; position: absolute; bottom: 0; width: 20px; height: 20px; }
.tab.active::before { left: -20px; background: radial-gradient(circle at 0 0, transparent 19.5px, #413849 20px); }
.tab.active::after { right: -20px; background: radial-gradient(circle at 100% 0, transparent 19.5px, #413849 20px); }
.tab.drive { width: 481px; padding: 0 28px 0 29px; gap: 17px; }
.tab.new { width: 473px; padding: 0 29px 0 21px; gap: 17px; }
.sep { width: 3px; height: 32px; background: #4a4152; border-radius: 2px; flex: none; }
.plus { margin-left: 21px; }
.tab-search { width: 56px; height: 56px; margin: 0 12px 0 auto; border-radius: 18px; background: #413849; display: flex; align-items: center; justify-content: center; }
.toolbar { height: 94px; flex: none; display: flex; align-items: center; background: #413849; border-radius: 18px 18px 0 0; padding: 0 41px 0 25px; border-bottom: 2px solid #45444a; }
.nav-btn { width: 40px; height: 40px; }
.fwd { margin-left: 31px; }
.reload { width: 32px; height: 32px; margin: 0 36px; }
.omnibox { width: 2292px; height: 68px; border-radius: 34px; background: #2b2134; display: flex; align-items: center; padding: 0 32px 0 10px; }
.site-info { width: 48px; height: 48px; border-radius: 50%; background: #413849; display: flex; align-items: center; justify-content: center; }
.url { flex: 1; margin-left: 16px; font-size: 27px; letter-spacing: .65px; color: #e8e0ee; }
.ext { margin-left: 36px; }
.sep.tall { background: #5d5467; margin-left: 34px; }
.dl { margin-left: 36px; }
.profile { width: 40px; height: 40px; margin-left: 35px; border-radius: 50%; background: #8b7167; color: #fff; font-size: 20px; display: flex; align-items: center; justify-content: center; }
.kebab { margin-left: auto; }

/* Page */
.page { flex: 1; display: flex; min-height: 0; background: #f0f1f5; }
.sidebar { width: 512px; background: #fff; display: flex; flex-direction: column; box-shadow: 1px 0 4px rgba(0,0,0,.1); z-index: 1; }
.sidebar nav { margin-top: 8px; border-top: 2px solid #e5e7eb; color: #4b5563; font-size: 31px; letter-spacing: -.12px; }
.sidebar h4 { height: 80px; line-height: 98px; padding-left: 32px; font-size: 23px; font-weight: 600; letter-spacing: 2.05px; color: #6b7280; }
.sidebar h4.config { height: 96px; line-height: 130px; }
.sidebar nav a { height: 96px; display: grid; grid-template-columns: 64px 1fr; align-items: center; padding-left: 32px; }
.sidebar nav a.accounts { letter-spacing: -.25px; }
.sidebar nav a svg { fill: currentColor; }
.sidebar nav a.current { background: #f0f1f5; color: #4a66ad; border-left: 8px solid #e7e5e4; }
.user { margin-top: auto; height: 138px; border-top: 2px solid #e5e7eb; display: flex; align-items: center; padding: 2px 32px 0; }
.user-pic { width: 64px; height: 64px; border-radius: 50%; background: #e5e7eb; display: flex; align-items: center; justify-content: center; fill: #6b7280; }
.user-text { margin: 5px 0 0 24px; flex: 1; display: flex; flex-direction: column; line-height: 36px; }
.user-text strong { font-size: 27px; font-weight: 500; letter-spacing: .25px; }
.user-text span { font-size: 24px; letter-spacing: -.2px; color: #6b7280; }
.dots { fill: #6b7280; }
main { flex: 1; min-width: 0; display: flex; flex-direction: column; }
.page-head { height: 56px; flex: none; background: #fff; box-shadow: 0 1px 5px rgba(0,0,0,.12); clip-path: inset(0 0 -10px 0); }
.page-head p { display: flex; align-items: center; gap: 13px; margin: 0 0 0 64px; height: 10px; font-size: 27px; line-height: 40px; letter-spacing: .15px; color: #6b7280; }
.page-head svg { fill: #6b7280; }
.content { padding: 48px 64px 0; }
.card { background: #fff; border-radius: 16px; box-shadow: 0 2px 6px rgba(0,0,0,.13); }
.stats { display: grid; grid-template-columns: repeat(4, 1fr); gap: 32px; }
.stat { height: 264px; padding: 40px; font-size: 27px; line-height: 40px; }
.top { display: flex; align-items: center; justify-content: space-between; height: 113px; color: #6b7280; letter-spacing: .15px; }
.top p { padding-top: 1px; }
.top b { display: block; margin-top: 8px; font-size: 47px; line-height: 64px; color: #0c0a09; }
.pill { width: 88px; height: 104px; border-radius: 44px / 46px; margin-top: -1px; display: flex; align-items: center; justify-content: center; }
.sub { margin-top: 32px; letter-spacing: .25px; }
.sub em { font-weight: 500; }
.blue .sub { color: #4a66ad; } .blue .pill { background: #dfe9fb; fill: #4a66ad; }
.green .sub { color: #62b440; } .green .pill { background: #e1f9e7; fill: #62b440; }
.purple .sub { color: #8438dc; } .purple .pill { background: #f0e7fd; fill: #8438dc; }
.rose .sub { color: #ef7371; } .rose .pill { background: #f8e2e1; fill: #ef7371; }

.quick { margin-top: 48px; height: 276px; border: 2px solid #bfd8fc; border-radius: 16px; background: #eff6ff; padding: 47px 48px 0; box-shadow: 0 2px 5px rgba(0,0,0,.07); }
.quick h2 { display: flex; align-items: center; gap: 15px; margin-left: -1px; height: 52px; font-size: 47px; font-weight: 600; letter-spacing: -2.35px; }
.quick h2 svg { color: #3563e9; margin-top: -3px; }
.quick-row { display: flex; justify-content: space-between; align-items: center; margin-top: 43px; height: 84px; }
.quick-row p { font-size: 27px; letter-spacing: .19px; line-height: 40px; color: #4b5563; margin-top: 4px; }
.quick-row small { display: block; margin-top: 6px; font-size: 24px; line-height: 36px; color: #6b7280; }
.btn { border: 0; border-radius: 12px; height: 80px; background: #4a66ad; color: #fff; font: 500 27px "Inter", sans-serif; display: flex; align-items: center; }
.publish { width: 380px; padding: 0 0 0 31px; letter-spacing: .4px; gap: 31px; }

.columns { display: flex; gap: 48px; margin-top: 48px; align-items: flex-start; }
.posts { width: 1478px; height: 900px; }
h3 { font-size: 35px; font-weight: 600; letter-spacing: -.1px; }
.posts header { height: 162px; border-bottom: 2px solid #e5e7eb; display: flex; align-items: center; padding: 0 85px 0 49px; }
.posts h3 { flex: 1; }
.more { margin-left: 78px; }
.scroller { margin: 32px 33px 0 32px; overflow: hidden; }
.table { margin-left: -30px; }
.row { display: grid; grid-template-columns: 571px 326px 215px 205px 1fr; align-items: center; height: 146px; border-bottom: 2px solid #e5e7eb; font-size: 27px; color: #111827; }
.row:last-child { border-bottom-color: transparent; }
.row.head { height: 82px; background: #f0f1f5; font-size: 23px; font-weight: 500; letter-spacing: 1.9px; color: #6b7280; }
.row.head span { padding-top: 2px; }
.post { display: flex; align-items: center; }
.post > i { width: 80px; height: 80px; border-radius: 8px; background: #f3f4f6; display: flex; align-items: center; justify-content: center; fill: #9ca3af; margin-right: 32px; }
.post p { font-weight: 500; line-height: 38px; letter-spacing: .25px; margin-top: 4px; }
.lang { display: block; width: max-content; padding: 0 16px; height: 36px; line-height: 36px; border-radius: 8px; background: #f1e7fd; color: #6427a6; font-size: 23px; font-weight: 500; letter-spacing: .8px; }
.account { display: flex; align-items: center; }
.account i { width: 64px; height: 64px; border-radius: 50%; background: #4a66ad; fill: #fff; display: flex; align-items: center; justify-content: center; margin-right: 16px; }
mark { display: inline-block; margin-top: 5px; height: 40px; line-height: 40px; padding: 0 16px; border-radius: 20px; background: #fdf8c6; color: #7f4c1c; font-size: 24px; font-weight: 600; letter-spacing: .15px; }
.actions { display: flex; align-items: center; gap: 23px; fill: #6b7280; }
.view-all { display: flex; align-items: center; justify-content: center; gap: 24px; margin: 49px 0 0 1px; height: 40px; color: #4a66ad; font-size: 27px; font-weight: 500; letter-spacing: .25px; }

.side { flex: 1; display: flex; flex-direction: column; gap: 48px; }
.panel { margin-left: -1px; background: #fff; border: 2px solid #e5e5e7; border-radius: 16px; box-shadow: 0 2px 4px rgba(0,0,0,.06); }
.panel h3 { letter-spacing: -.93px; }
.panel header { height: 138px; padding: 0 0 1px 49px; display: flex; align-items: center; border-bottom: 2px solid #e5e7eb; }
.import { height: 538px; }
.panel-body { padding: 48px; }
.notice { height: 188px; border: 2px solid #e5e5e5; border-radius: 16px; padding: 27px 32px; display: flex; gap: 24px; font-size: 27px; line-height: 40px; letter-spacing: .17px; }
.notice svg { margin-top: 5px; }
.notice p { width: 430px; }
.connect { width: 100%; margin-top: 32px; justify-content: center; gap: 14px; letter-spacing: .25px; }
.recent { height: 300px; }
.recent h3 { letter-spacing: -1.1px; }

/* Dock */
.desktop { position: relative; flex: 1; display: flex; padding: 3px 0 0 176px; background: #000; }
.flare { position: absolute; left: 0; bottom: 0; }
.dock { width: 2528px; height: 107px; border: 2px solid #3a3a3b; border-radius: 38px; background: #131313; display: flex; gap: 20px; padding: 14px 0 0 14px; box-shadow: 0 0 90px -30px rgba(0,0,0,.5); z-index: 2; }
.app { position: relative; width: 70px; height: 70px; flex: none; }
.app > svg { width: 70px; height: 70px; overflow: visible; }
.claude { margin-left: 2px; }
.run::after { content: ""; position: absolute; left: 30px; top: 80px; width: 8px; height: 8px; border-radius: 50%; background: #8e8e8e; }
.badge { position: absolute; left: 45px; top: -9px; width: 34px; text-align: center; color: #fff; font-size: 23px; line-height: 34px; }
.cal small, .cal strong { position: absolute; left: 0; width: 70px; text-align: center; }
.cal small { top: 3px; font-size: 14px; line-height: 19px; font-weight: 700; color: #fff; }
.cal strong { top: 23px; font-size: 39px; line-height: 42px; font-weight: 400; letter-spacing: -1px; color: #222; }
.csv small { position: absolute; left: 7px; top: 58px; width: 56px; text-align: center; font-size: 13px; line-height: 14px; color: #666; }
.rule { width: 2px; height: 80px; margin: -2px 8px 0 11px; background: #3f3f3f; flex: none; }
.rule.second { margin: -2px 9px 0 9px; }
.tooltip { position: absolute; left: -40px; top: -92px; width: 149px; height: 56px; border-radius: 10px; border: 2px solid #000; box-shadow: inset 0 0 0 2px #777; background: #5a5a5a; color: #f2f2f2; font-size: 27px; letter-spacing: .2px; line-height: 53px; text-align: center; }
.tooltip svg { position: absolute; left: 55px; top: 51px; }
```
